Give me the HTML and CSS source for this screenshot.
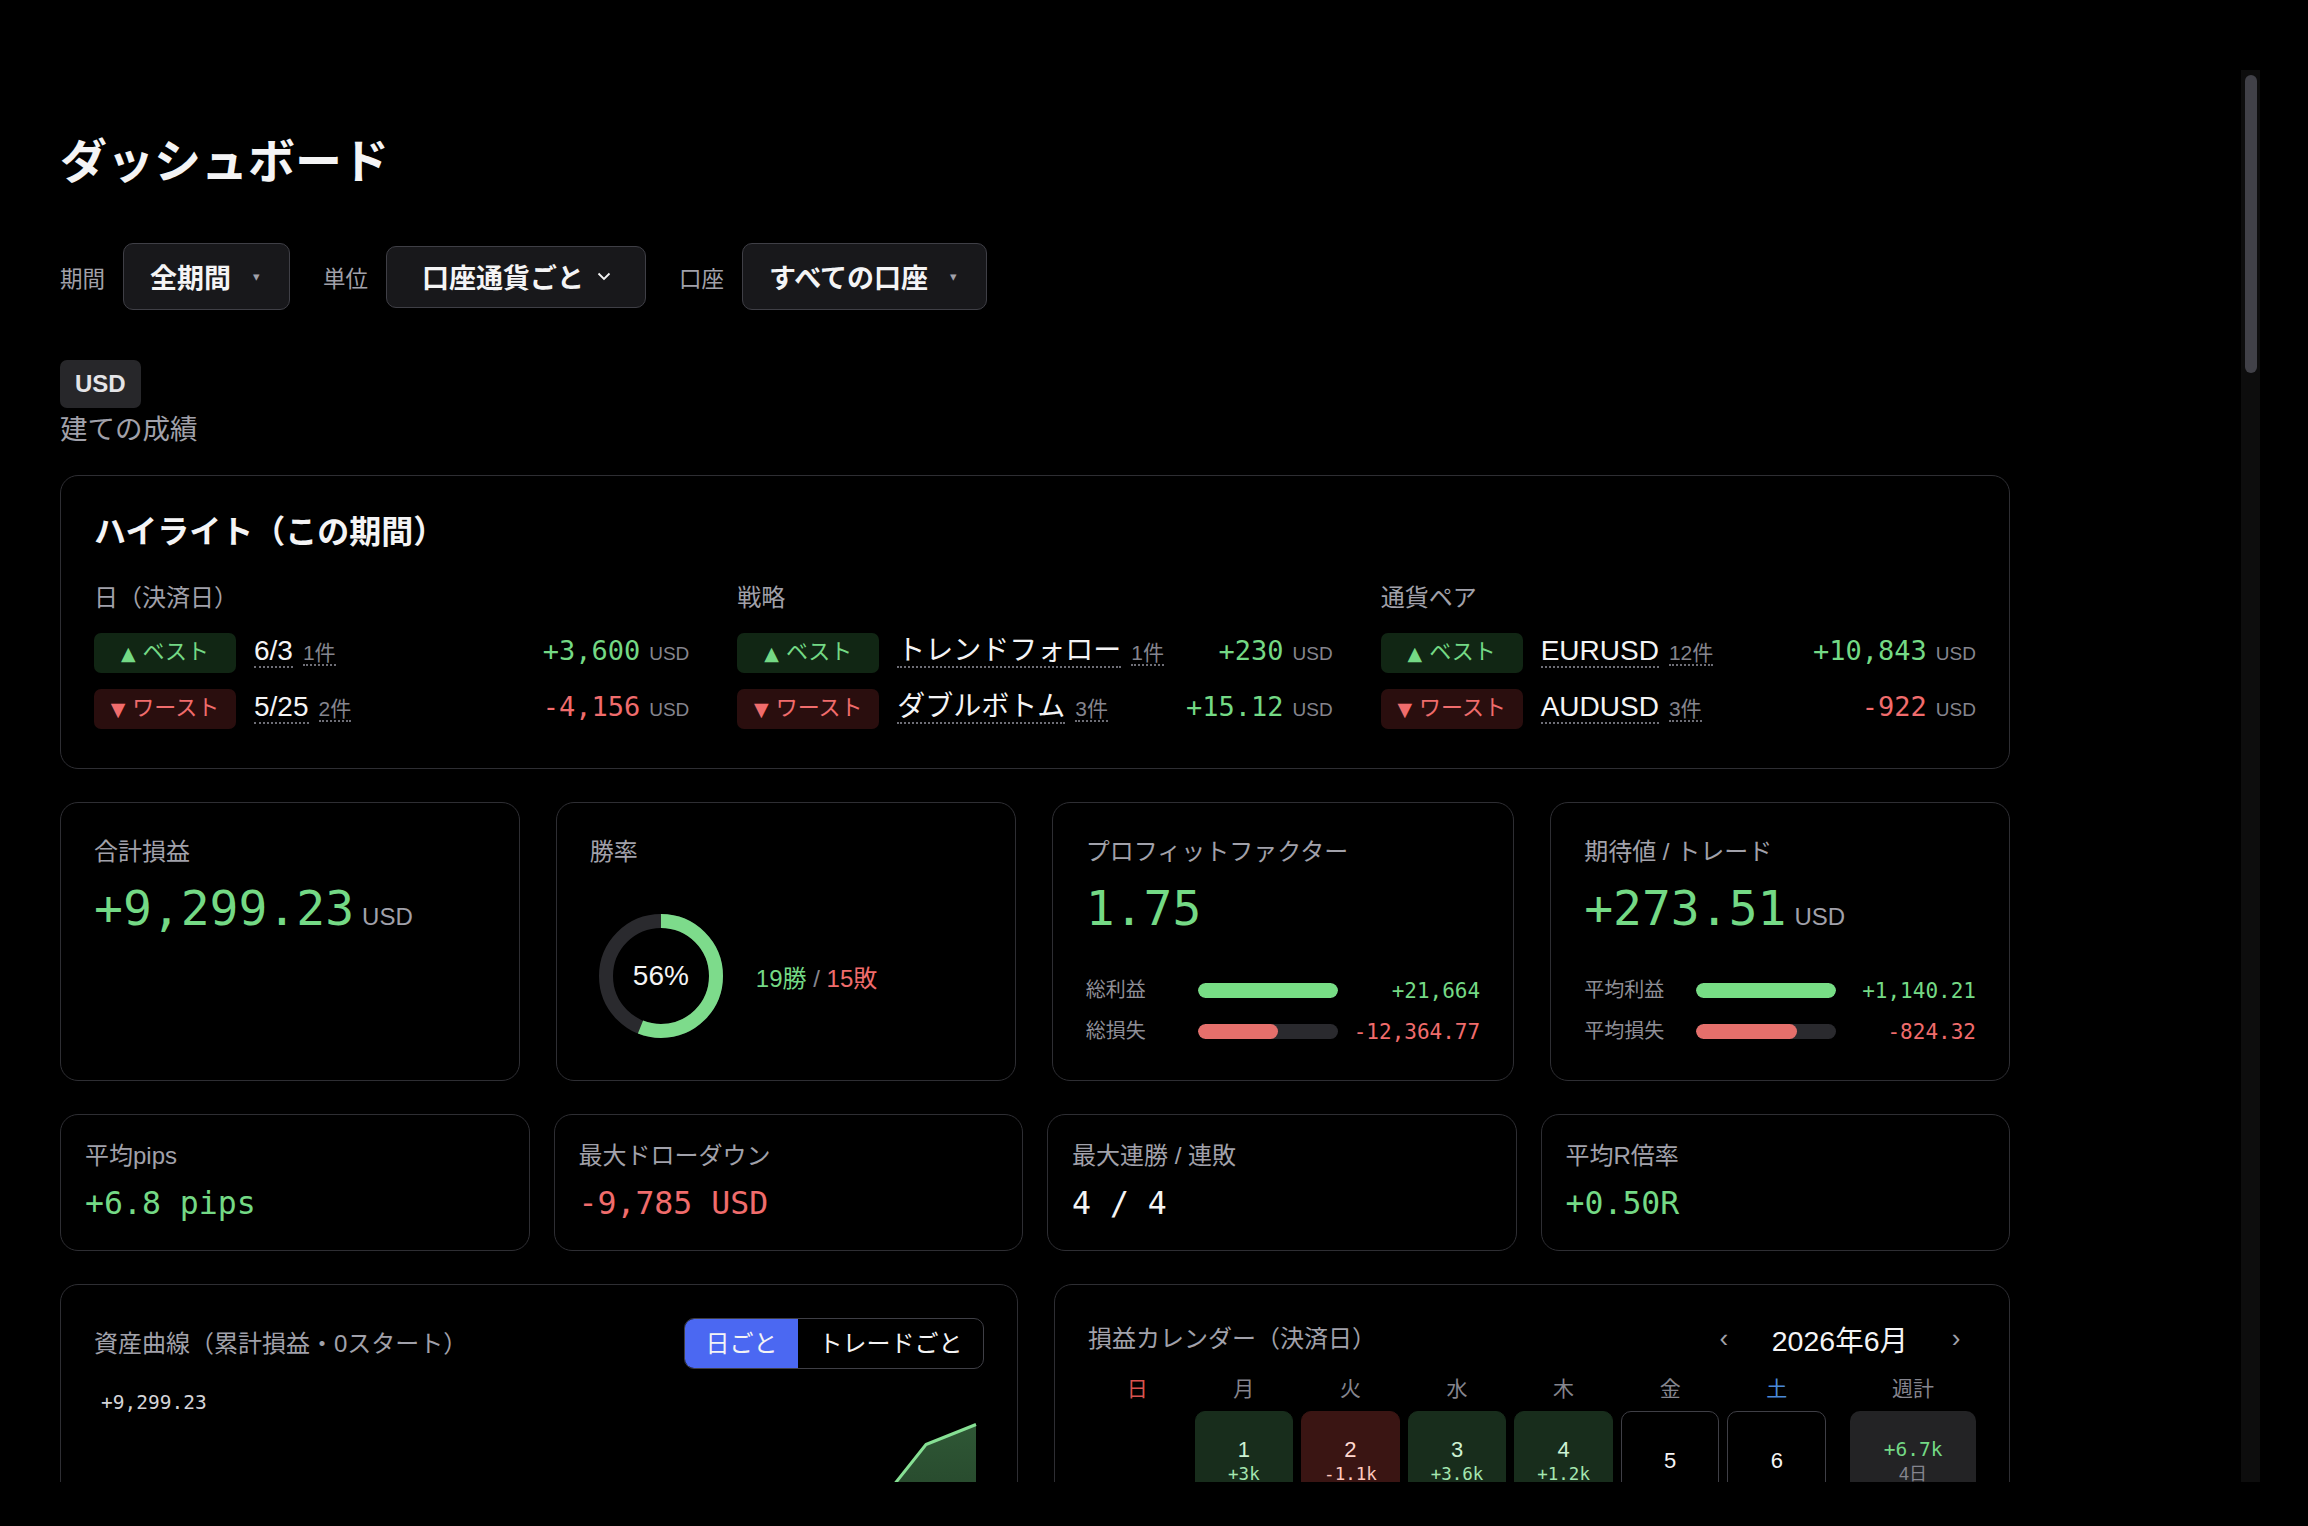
FILE: index.html
```html
<!DOCTYPE html>
<html lang="ja">
<head>
    <meta charset="UTF-8">
    <meta name="viewport" content="width=device-width, initial-scale=1.0">
    <title>ダッシュボード</title>
    <link rel="stylesheet" href="styles.css">
</head>
<body>
    <div class="window">
        <main class="main">
            <div class="page">
                <h1 class="page-title">ダッシュボード</h1>

                <div class="filters">
                    <div class="filter">
                        <span class="filter-label">期間</span>
                        <button class="select">全期間<span class="caret">▾</span></button>
                    </div>
                    <div class="filter">
                        <span class="filter-label">単位</span>
                        <button class="select select-native">口座通貨ごと
                            <svg class="chev" width="14" height="9" viewBox="0 0 14 9"><polyline points="1.5,1.5 7,7 12.5,1.5" fill="none" stroke="#f4f4f5" stroke-width="1.8"/></svg>
                        </button>
                    </div>
                    <div class="filter">
                        <span class="filter-label">口座</span>
                        <button class="select">すべての口座<span class="caret">▾</span></button>
                    </div>
                </div>

                <div class="currency-head">
                    <span class="cur-badge">USD</span>
                    <div class="cur-sub">建ての成績</div>
                </div>

                <!-- highlights -->
                <section class="card highlight">
                    <h2 class="card-title">ハイライト（この期間）</h2>
                    <div class="hl-grid">
                        <div class="hl-col">
                            <div class="hl-head">日（決済日）</div>
                            <div class="hl-row">
                                <span class="tag tag-best"><i>▲</i>ベスト</span>
                                <span class="hl-name">6/3</span><span class="hl-count">1件</span>
                                <span class="hl-val pos">+3,600<small>USD</small></span>
                            </div>
                            <div class="hl-row">
                                <span class="tag tag-worst"><i>▼</i>ワースト</span>
                                <span class="hl-name">5/25</span><span class="hl-count">2件</span>
                                <span class="hl-val neg">-4,156<small>USD</small></span>
                            </div>
                        </div>
                        <div class="hl-col">
                            <div class="hl-head">戦略</div>
                            <div class="hl-row">
                                <span class="tag tag-best"><i>▲</i>ベスト</span>
                                <span class="hl-name">トレンドフォロー</span><span class="hl-count">1件</span>
                                <span class="hl-val pos">+230<small>USD</small></span>
                            </div>
                            <div class="hl-row">
                                <span class="tag tag-worst"><i>▼</i>ワースト</span>
                                <span class="hl-name">ダブルボトム</span><span class="hl-count">3件</span>
                                <span class="hl-val pos">+15.12<small>USD</small></span>
                            </div>
                        </div>
                        <div class="hl-col">
                            <div class="hl-head">通貨ペア</div>
                            <div class="hl-row">
                                <span class="tag tag-best"><i>▲</i>ベスト</span>
                                <span class="hl-name">EURUSD</span><span class="hl-count">12件</span>
                                <span class="hl-val pos">+10,843<small>USD</small></span>
                            </div>
                            <div class="hl-row">
                                <span class="tag tag-worst"><i>▼</i>ワースト</span>
                                <span class="hl-name">AUDUSD</span><span class="hl-count">3件</span>
                                <span class="hl-val neg">-922<small>USD</small></span>
                            </div>
                        </div>
                    </div>
                </section>

                <!-- main KPIs -->
                <div class="kpi-grid">
                    <div class="card kpi">
                        <div class="kpi-label">合計損益</div>
                        <div class="kpi-value pos">+9,299.23<small>USD</small></div>
                    </div>
                    <div class="card kpi">
                        <div class="kpi-label">勝率</div>
                        <div class="winrate">
                            <div class="donut">
                                <svg width="124" height="124" viewBox="0 0 124 124">
                                    <circle cx="62" cy="62" r="55" fill="none" stroke="#2a2a2e" stroke-width="14"/>
                                    <circle cx="62" cy="62" r="55" fill="none" stroke="#7ddb8b" stroke-width="14" stroke-dasharray="193.5 345.6" transform="rotate(-90 62 62)"/>
                                </svg>
                                <span class="donut-text">56%</span>
                            </div>
                            <div class="wl"><span class="pos">19勝</span> <span class="slash">/</span> <span class="neg">15敗</span></div>
                        </div>
                    </div>
                    <div class="card kpi">
                        <div class="kpi-label">プロフィットファクター</div>
                        <div class="kpi-value pos">1.75</div>
                        <div class="bars">
                            <span class="bar-label">総利益</span>
                            <div class="bar"><div class="bar-fill green" style="width:100%"></div></div>
                            <span class="bar-val pos">+21,664</span>
                            <span class="bar-label">総損失</span>
                            <div class="bar"><div class="bar-fill red" style="width:57%"></div></div>
                            <span class="bar-val neg">-12,364.77</span>
                        </div>
                    </div>
                    <div class="card kpi">
                        <div class="kpi-label">期待値 / トレード</div>
                        <div class="kpi-value pos">+273.51<small>USD</small></div>
                        <div class="bars">
                            <span class="bar-label">平均利益</span>
                            <div class="bar"><div class="bar-fill green" style="width:100%"></div></div>
                            <span class="bar-val pos">+1,140.21</span>
                            <span class="bar-label">平均損失</span>
                            <div class="bar"><div class="bar-fill red" style="width:72%"></div></div>
                            <span class="bar-val neg">-824.32</span>
                        </div>
                    </div>
                </div>

                <!-- secondary KPIs -->
                <div class="mini-grid">
                    <div class="card mini">
                        <div class="kpi-label">平均pips</div>
                        <div class="mini-value pos">+6.8 pips</div>
                    </div>
                    <div class="card mini">
                        <div class="kpi-label">最大ドローダウン</div>
                        <div class="mini-value neg">-9,785 USD</div>
                    </div>
                    <div class="card mini">
                        <div class="kpi-label">最大連勝 / 連敗</div>
                        <div class="mini-value">4 / 4</div>
                    </div>
                    <div class="card mini">
                        <div class="kpi-label">平均R倍率</div>
                        <div class="mini-value pos">+0.50R</div>
                    </div>
                </div>

                <div class="bottom-grid">
                    <!-- equity curve -->
                    <section class="card chart-card">
                        <div class="card-head">
                            <div class="kpi-label">資産曲線（累計損益・0スタート）</div>
                            <div class="seg">
                                <button class="seg-btn active">日ごと</button>
                                <button class="seg-btn">トレードごと</button>
                            </div>
                        </div>
                        <div class="axis-max">+9,299.23</div>
                        <svg class="equity" width="890" height="380" viewBox="0 0 890 380">
                            <defs>
                                <linearGradient id="eqFill" x1="0" y1="0" x2="0" y2="1">
                                    <stop offset="0" stop-color="#6fcf7f" stop-opacity="0.42"/>
                                    <stop offset="1" stop-color="#6fcf7f" stop-opacity="0.08"/>
                                </linearGradient>
                            </defs>
                            <polygon fill="url(#eqFill)" points="8,362 60,354 120,342 180,350 240,332 300,320 360,328 420,302 480,292 540,298 600,264 660,242 720,202 760,152 801,67.5 832,28.5 882,8.5 882,380 8,380"/>
                            <polyline fill="none" stroke="#86e094" stroke-width="3" stroke-linejoin="round" points="8,362 60,354 120,342 180,350 240,332 300,320 360,328 420,302 480,292 540,298 600,264 660,242 720,202 760,152 801,67.5 832,28.5 882,8.5"/>
                        </svg>
                    </section>

                    <!-- P/L calendar -->
                    <section class="card cal-card">
                        <div class="card-head cal-head">
                            <div class="kpi-label">損益カレンダー（決済日）</div>
                            <div class="month-nav">
                                <button class="nav-btn">‹</button>
                                <span class="month">2026年6月</span>
                                <button class="nav-btn">›</button>
                            </div>
                        </div>
                        <div class="cal-grid">
                            <div class="wd sun">日</div><div class="wd">月</div><div class="wd">火</div><div class="wd">水</div><div class="wd">木</div><div class="wd">金</div><div class="wd sat">土</div><div class="wd wk">週計</div>

                            <div></div>
                            <div class="day win"><b>1</b><span>+3k</span></div>
                            <div class="day loss"><b>2</b><span>-1.1k</span></div>
                            <div class="day win"><b>3</b><span>+3.6k</span></div>
                            <div class="day win"><b>4</b><span>+1.2k</span></div>
                            <div class="day"><b>5</b></div>
                            <div class="day"><b>6</b></div>
                            <div class="week"><span class="pos">+6.7k</span><em>4日</em></div>

                            <div class="day"><b>7</b></div>
                            <div class="day"><b>8</b></div>
                            <div class="day"><b>9</b></div>
                            <div class="day"><b>10</b></div>
                            <div class="day"><b>11</b></div>
                            <div class="day"><b>12</b></div>
                            <div class="day"><b>13</b></div>
                            <div class="week"><em>0日</em></div>
                        </div>
                    </section>
                </div>
            </div>
        </main>
        <div class="scrollbar"><div class="thumb"></div></div>
    </div>
</body>
</html>
```

FILE: styles.css
```css
/* --- Base --- */
:root {
    --bg: #000;
    --card-border: #2e2e33;
    --text: #f4f4f5;
    --muted: #a1a1aa;
    --dim: #85858e;
    --green: #74d985;
    --red: #f06c6c;
    --blue: #4b68f2;
    --sans: "Liberation Sans", "Noto Sans CJK JP", sans-serif;
    --mono: "DejaVu Sans Mono", monospace;
}
*, *::before, *::after { box-sizing: border-box; margin: 0; padding: 0; }
body {
    background: var(--bg);
    color: var(--text);
    font-family: var(--sans);
    overflow: hidden;
}
button { font: inherit; color: inherit; background: none; border: 0; cursor: pointer; }

.window { display: flex; width: 2260px; height: 1412px; margin-top: 70px; }
.main { flex: 1; overflow: hidden; }
.scrollbar { width: 19px; background: #0d0d0d; }
.thumb { height: 298px; margin: 5px 3.5px 0; background: #414148; border-radius: 6px; }

.page { max-width: 1950px; padding: 64px 60px 60px; box-sizing: content-box; }
.page-title { font-size: 47px; font-weight: 700; line-height: 1.2; }

/* --- Filters --- */
.filters { display: flex; align-items: center; gap: 33px; margin-top: 53px; }
.filter { display: flex; align-items: center; gap: 18px; }
.filter-label { font-size: 22.5px; color: var(--muted); }
.select {
    display: inline-flex; align-items: center; gap: 22px;
    height: 67px; padding: 0 29px 0 26px;
    background: #18181b; border: 1.5px solid #3f3f46; border-radius: 10px;
    font-size: 27px; font-weight: 700; color: var(--text);
}
.select-native { height: 62px; padding: 0 34px 0 35px; gap: 13px; }
.caret { font-size: 13px; color: var(--muted); font-weight: 400; }
.chev { display: block; }

/* --- Currency heading --- */
.currency-head { margin-top: 49px; padding-top: 1px; }
.cur-badge { display: inline-block; padding: 6px 15px; line-height: 36px; font-size: 24px; font-weight: 700; background: #27272a; color: #e4e4e7; border-radius: 7px; }
.cur-sub { font-size: 27.5px; line-height: 1.4; color: var(--muted); margin-top: 3px; }

/* --- Cards --- */
.card { border: 1.5px solid var(--card-border); border-radius: 18px; background: #000; }
.pos { color: var(--green); }
.neg { color: var(--red); }

.highlight { margin-top: 25px; padding: 34px 33px 39px; }
.card-title { font-size: 32px; font-weight: 700; line-height: 44px; }
.hl-grid { display: grid; grid-template-columns: repeat(3, 1fr); column-gap: 48px; margin-top: 27px; }
.hl-head { font-size: 24px; line-height: 34px; color: var(--muted); margin-bottom: 18px; }
.hl-row { display: flex; align-items: baseline; margin-bottom: 16px; }
.hl-row:last-child { margin-bottom: 0; }
.tag { width: 142px; height: 40px; border-radius: 7px; display: inline-flex; align-items: center; justify-content: center; font-size: 22px; line-height: 1.4; margin-right: 18px; }
.tag i { font-style: normal; font-family: "DejaVu Sans", sans-serif; font-size: 19px; margin-right: 7px; }
.tag-best { background: #112614; color: var(--green); }
.tag-worst { background: #2a0e0e; color: var(--red); }
.hl-name { font-size: 28px; line-height: 1.1; border-bottom: 2px dotted #6e6e76; }
.hl-count { font-size: 21px; line-height: 1.1; color: var(--dim); border-bottom: 2px dotted #6e6e76; margin-left: 10px; }
.hl-val { margin-left: auto; font-family: var(--mono); font-size: 27px; }
.hl-val small { font-family: var(--sans); font-size: 19px; color: var(--dim); margin-left: 9px; }

/* --- KPI cards --- */
.kpi-grid { display: grid; grid-template-columns: repeat(4, 1fr); gap: 36px; margin-top: 33px; }
.kpi { padding: 32px 33px 33px; }
.kpi-label { font-size: 24px; line-height: 34px; color: var(--muted); }
.kpi-value { margin-top: 11.5px; font-family: var(--mono); font-size: 48px; line-height: 1.2; }
.kpi-value small { font-family: var(--sans); font-size: 24px; color: var(--muted); margin-left: 8px; }

.winrate { display: flex; align-items: center; gap: 33px; margin-top: 45.5px; padding-left: 9px; }
.donut { position: relative; width: 124px; height: 124px; }
.donut svg { display: block; }
.donut-text { position: absolute; inset: 0; display: flex; align-items: center; justify-content: center; font-size: 28px; }
.wl { font-size: 24px; }
.wl .slash { color: var(--dim); }

.bars { display: grid; grid-template-columns: 96px 140px 1fr; column-gap: 16px; row-gap: 10px; align-items: center; margin-top: 37.5px; }
.bar-label { font-size: 20px; line-height: 31px; color: #8e8e96; }
.bar { height: 15px; border-radius: 8px; background: #2a2a2e; overflow: hidden; }
.bar-fill { height: 100%; border-radius: 8px; }
.bar-fill.green { background: #77dd85; }
.bar-fill.red { background: #e56f6b; }
.bar-val { text-align: right; font-family: var(--mono); font-size: 21px; }

/* --- Secondary --- */
.mini-grid { display: grid; grid-template-columns: repeat(4, 1fr); gap: 24px; margin-top: 33px; }
.mini { padding: 24px; }
.mini-value { margin-top: 10px; margin-bottom: 2px; font-family: var(--mono); font-size: 31.5px; line-height: 41px; }

/* --- Bottom --- */
.bottom-grid { display: grid; grid-template-columns: 1fr 1fr; gap: 36px; margin-top: 33px; }
.chart-card, .cal-card { padding: 33px; }
.card-head { display: flex; align-items: center; justify-content: space-between; }
.seg { display: flex; border: 1.5px solid #3f3f46; border-radius: 10px; overflow: hidden; }
.seg-btn { font-size: 24px; line-height: 34px; padding: 7.5px 20.5px; color: var(--text); }
.seg-btn.active { background: var(--blue); }
.axis-max { margin-top: 20px; padding-left: 7px; font-family: var(--mono); font-size: 19.5px; line-height: 27px; color: #d4d4d8; }
.equity { display: block; }

.month-nav { display: flex; align-items: center; gap: 28px; }
.nav-btn { width: 40px; height: 40px; font-size: 26px; color: var(--muted); }
.month { font-size: 28.5px; }

.cal-grid { display: grid; grid-template-columns: repeat(7, 1fr) 142px; column-gap: 8px; row-gap: 8px; margin-top: 15px; }
.wd { text-align: center; font-size: 21px; line-height: 29px; color: #85858e; }
.wd.sun { color: #d9534f; }
.wd.sat { color: #4a8ad8; }
.wd.wk, .week { justify-self: end; width: 126px; }
.day {
    aspect-ratio: 1; border-radius: 10px; border: 1.5px solid #3f3f46;
    display: flex; flex-direction: column; align-items: center; justify-content: center;
}
.day b { font-weight: 400; font-size: 22px; line-height: 27px; }
.day span { font-family: var(--mono); font-size: 17.5px; line-height: 22px; }
.day.win { background: #182d1c; border-color: #182d1c; }
.day.win b { color: #cdf2d3; }
.day.win span { color: #a4e6b0; }
.day.loss { background: #3a1513; border-color: #3a1513; }
.day.loss b { color: #ffd8cf; }
.day.loss span { color: #ffc8bd; }
.week {
    border-radius: 10px; background: #232325;
    display: flex; flex-direction: column; align-items: center; justify-content: center;
}
.week span { font-family: var(--mono); font-size: 19.5px; line-height: 27px; }
.week em { font-style: normal; font-size: 18px; line-height: 22px; color: #85858e; }
```
